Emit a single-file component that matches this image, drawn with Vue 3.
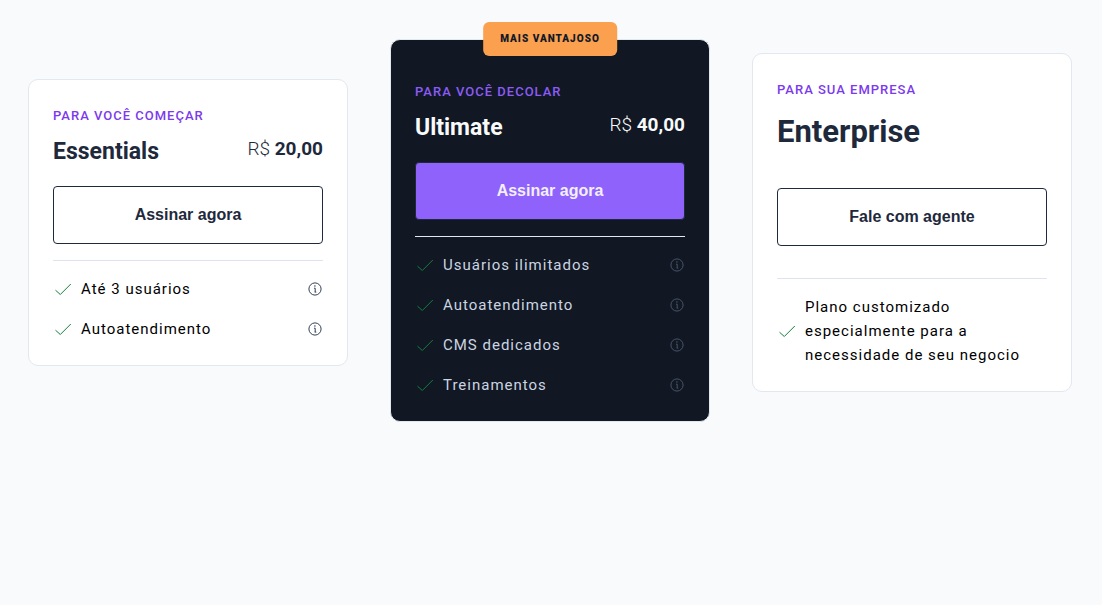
<script setup>
const plans = [
  {
    id: 'essentials',
    tagline: 'Para você começar',
    name: 'Essentials',
    price: '20,00',
    action: 'Assinar agora',
    features: ['Até 3 usuários', 'Autoatendimento'],
  },
  {
    id: 'ultimate',
    tagline: 'Para você decolar',
    name: 'Ultimate',
    price: '40,00',
    badge: 'Mais vantajoso',
    action: 'Assinar agora',
    features: ['Usuários ilimitados', 'Autoatendimento', 'CMS dedicados', 'Treinamentos'],
  },
  {
    id: 'enterprise',
    tagline: 'Para sua empresa',
    name: 'Enterprise',
    action: 'Fale com agente',
    features: ['Plano customizado especialmente para a necessidade de seu negocio'],
  },
]
</script>

<template>
  <main class="plans">
    <article
      v-for="plan in plans"
      :key="plan.id"
      class="card"
      :class="{ featured: plan.badge, custom: !plan.price }"
    >
      <span v-if="plan.badge" class="badge">{{ plan.badge }}</span>
      <p class="tagline">{{ plan.tagline }}</p>
      <header class="heading">
        <h2 class="name">{{ plan.name }}</h2>
        <p v-if="plan.price" class="price">R$ <strong>{{ plan.price }}</strong></p>
      </header>
      <button type="button" class="action">{{ plan.action }}</button>
      <hr class="divider" />
      <ul class="features">
        <li v-for="feature in plan.features" :key="feature" class="feature">
          <svg class="check" viewBox="0 0 20 20" aria-hidden="true">
            <path d="M2.5 11.2 L7.3 15.5 L17.8 5" />
          </svg>
          <span class="text">{{ feature }}</span>
          <svg v-if="plan.price" class="info" viewBox="0 0 16 16" aria-hidden="true">
            <circle cx="8" cy="8" r="6.1" />
            <path d="M7 7.2 H8.2 V11 M7.6 11.1 H9.3" />
            <circle class="dot" cx="7.9" cy="5" r="0.8" />
          </svg>
        </li>
      </ul>
    </article>
  </main>
</template>

<style>
body {
  background: #f8fafc;
}
</style>

<style scoped>
.plans {
  display: grid;
  grid-template-columns: repeat(3, minmax(0, 1fr));
  align-items: center;
  gap: 42px;
  padding: 22px 30px 22px 28px;
  font-family: Roboto, "Noto Sans", sans-serif;
  color: #1e293b;
}

.card {
  position: relative;
  display: flex;
  flex-direction: column;
  padding: 24px;
  border: 1px solid #e2e8f0;
  border-radius: 10px;
  background: #fff;
}

.featured {
  margin-top: 17px;
  padding-top: 40px;
  background: #111723;
  color: #f8fafc;
}

.badge {
  position: absolute;
  top: -18px;
  left: 50%;
  transform: translateX(-50%);
  padding: 0 17px;
  border-radius: 6px;
  background: #fba04e;
  color: #111827;
  font-size: 10px;
  font-weight: 900;
  line-height: 34px;
  letter-spacing: 1px;
  text-transform: uppercase;
  white-space: nowrap;
}

.tagline {
  margin: 0;
  color: #7c3aed;
  font-size: 13px;
  font-weight: 500;
  line-height: 24px;
  letter-spacing: 1px;
  text-transform: uppercase;
}

.featured .tagline {
  color: #8b5cf6;
}

.heading {
  display: flex;
  justify-content: space-between;
  align-items: flex-start;
  margin: 8px 0 18px;
}

.name {
  margin: 0;
  font-size: 23px;
  font-weight: 700;
  line-height: 32px;
}

.custom .heading {
  margin-bottom: 34px;
}

.custom .name {
  font-size: 31px;
  line-height: 44px;
}

.price {
  margin: 0;
  font-size: 19px;
  font-weight: 300;
  line-height: 26px;
}

.price strong {
  font-weight: 700;
}

.action {
  height: 58px;
  border: 1px solid #1e293b;
  border-radius: 4px;
  background: transparent;
  color: #1e293b;
  font-family: "Liberation Sans", Arial, sans-serif;
  font-size: 16px;
  font-weight: 700;
  cursor: pointer;
}

.featured .action {
  background: #8f62fb;
  color: #f3effe;
}

.divider {
  width: 100%;
  height: 1px;
  margin: 16px 0;
  border: 0;
  background: #dde4ed;
}

.custom .divider {
  margin-top: 32px;
}

.featured .divider {
  background: #e2e8f0;
}

.features {
  display: flex;
  flex-direction: column;
  gap: 16px;
  margin: 0;
  padding: 0;
  list-style: none;
}

.feature {
  display: flex;
  align-items: center;
  gap: 8px;
  color: #000;
  font-size: 15px;
  line-height: 24px;
  letter-spacing: 1px;
}

.featured .feature {
  color: #cbd5e1;
}

.text {
  flex: 1;
}

.check {
  flex: none;
  width: 20px;
  height: 20px;
  fill: none;
  stroke: #15803d;
  stroke-width: 1;
}

.info {
  flex: none;
  width: 16px;
  height: 16px;
  fill: none;
  stroke: #334155;
  stroke-width: 1;
}

.info .dot {
  fill: #334155;
  stroke: none;
}

.featured .info {
  stroke: #475569;
}

.featured .info .dot {
  fill: #475569;
}
</style>
